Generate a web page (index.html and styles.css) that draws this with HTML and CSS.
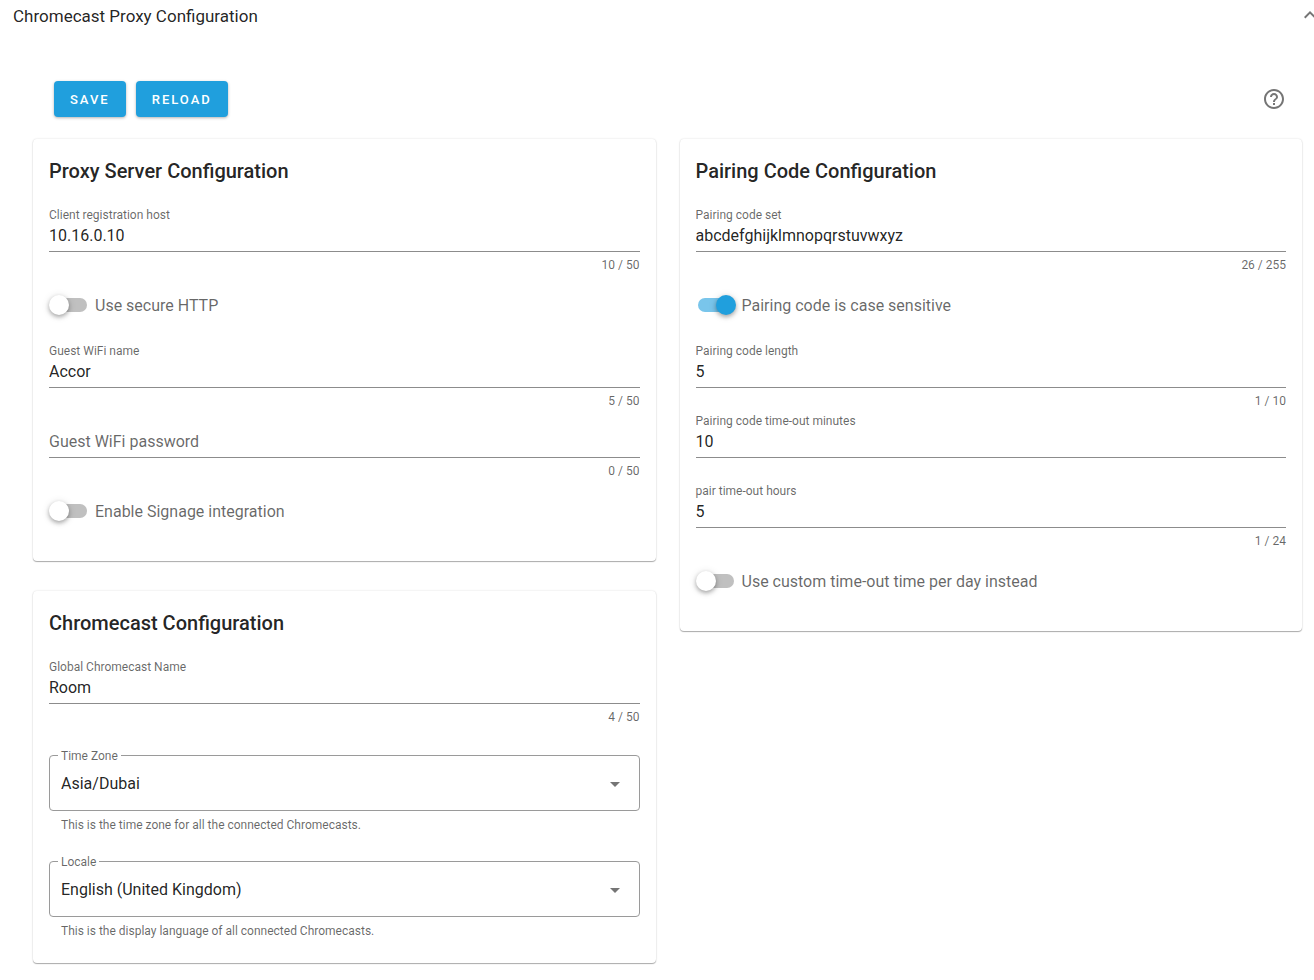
FILE: index.html
```html
<!DOCTYPE html>
<html lang="en">
<head>
<meta charset="utf-8">
<title>Chromecast Proxy Configuration</title>
<link rel="stylesheet" href="styles.css">
</head>
<body>
<header class="panel-header">
  <h1 class="panel-title">Chromecast Proxy Configuration</h1>
  <button class="icon-button" type="button" aria-label="Collapse">
    <svg width="24" height="24" viewBox="0 0 24 24"><path d="M7.41 15.41L12 10.83l4.59 4.58L18 14l-6-6-6 6z"/></svg>
  </button>
</header>
<main class="panel">
  <div class="toolbar">
    <button class="button" type="button">SAVE</button>
    <button class="button" type="button">RELOAD</button>
    <button class="icon-button help" type="button" aria-label="Help">
      <svg width="24" height="24" viewBox="0 0 24 24"><path d="M11 18h2v-2h-2v2zm1-16C6.48 2 2 6.48 2 12s4.48 10 10 10 10-4.48 10-10S17.52 2 12 2zm0 18c-4.41 0-8-3.59-8-8s3.59-8 8-8 8 3.59 8 8-3.59 8-8 8zm0-14c-2.21 0-4 1.79-4 4h2c0-1.1.9-2 2-2s2 .9 2 2c0 2-3 1.75-3 5h2c0-2.25 3-2.5 3-5 0-2.21-1.79-4-4-4z"/></svg>
    </button>
  </div>
  <div class="columns">
    <div class="column">
      <section class="card">
        <h2 class="card-title">Proxy Server Configuration</h2>
        <div class="field">
          <label for="host">Client registration host</label>
          <input id="host" type="text" value="10.16.0.10">
          <span class="counter">10 / 50</span>
        </div>
        <div class="switch">
          <input id="secure" type="checkbox">
          <label for="secure">Use secure HTTP</label>
        </div>
        <div class="field">
          <label for="wifi">Guest WiFi name</label>
          <input id="wifi" type="text" value="Accor">
          <span class="counter">5 / 50</span>
        </div>
        <div class="field field-empty">
          <label for="password">Guest WiFi password</label>
          <input id="password" type="text">
          <span class="counter">0 / 50</span>
        </div>
        <div class="switch">
          <input id="signage" type="checkbox">
          <label for="signage">Enable Signage integration</label>
        </div>
      </section>
      <section class="card">
        <h2 class="card-title">Chromecast Configuration</h2>
        <div class="field">
          <label for="name">Global Chromecast Name</label>
          <input id="name" type="text" value="Room">
          <span class="counter">4 / 50</span>
        </div>
        <div class="select-field">
          <fieldset class="outline">
            <legend><label for="zone">Time Zone</label></legend>
            <select id="zone"><option>Asia/Dubai</option></select>
            <svg class="arrow" width="24" height="24" viewBox="0 0 24 24"><path d="M7 10l5 5 5-5z"/></svg>
          </fieldset>
          <p class="hint">This is the time zone for all the connected Chromecasts.</p>
        </div>
        <div class="select-field">
          <fieldset class="outline">
            <legend><label for="locale">Locale</label></legend>
            <select id="locale"><option>English (United Kingdom)</option></select>
            <svg class="arrow" width="24" height="24" viewBox="0 0 24 24"><path d="M7 10l5 5 5-5z"/></svg>
          </fieldset>
          <p class="hint">This is the display language of all connected Chromecasts.</p>
        </div>
      </section>
    </div>
    <div class="column">
      <section class="card">
        <h2 class="card-title">Pairing Code Configuration</h2>
        <div class="field">
          <label for="set">Pairing code set</label>
          <input id="set" type="text" value="abcdefghijklmnopqrstuvwxyz">
          <span class="counter">26 / 255</span>
        </div>
        <div class="switch">
          <input id="case" type="checkbox" checked>
          <label for="case">Pairing code is case sensitive</label>
        </div>
        <div class="field">
          <label for="length">Pairing code length</label>
          <input id="length" type="text" value="5">
          <span class="counter">1 / 10</span>
        </div>
        <div class="field">
          <label for="minutes">Pairing code time-out minutes</label>
          <input id="minutes" type="text" value="10">
        </div>
        <div class="field">
          <label for="hours">pair time-out hours</label>
          <input id="hours" type="text" value="5">
          <span class="counter">1 / 24</span>
        </div>
        <div class="switch">
          <input id="custom" type="checkbox">
          <label for="custom">Use custom time-out time per day instead</label>
        </div>
      </section>
    </div>
  </div>
</main>
</body>
</html>
```
FILE: styles.css
```css
* {
  box-sizing: border-box;
}

body {
  margin: 0;
  overflow-x: hidden;
  background: #fff;
  color: rgba(0, 0, 0, 0.87);
  font-family: "Proxima Nova", Roboto, sans-serif;
  font-size: 16px;
}

button,
input,
select {
  font: inherit;
  color: inherit;
}

.panel-header {
  display: flex;
  align-items: center;
  justify-content: space-between;
  height: 32px;
  margin-right: -8px;
  padding-left: 13px;
}

.panel-title {
  margin: 0;
  font-size: 17px;
  font-weight: 400;
}

.icon-button {
  display: flex;
  padding: 0;
  border: 0;
  background: none;
  cursor: pointer;
}

.icon-button svg,
.arrow {
  fill: #757575;
}

.panel-header .icon-button {
  padding-bottom: 2px;
}

.panel {
  padding: 49px 12px 16px 33px;
}

.toolbar {
  display: flex;
  align-items: center;
  gap: 10px;
  margin-bottom: 22px;
  padding: 0 16px 0 21px;
}

.button {
  height: 36px;
  padding: 0 16px;
  border: 0;
  border-radius: 4px;
  background: #209fdd;
  box-shadow: 0 1px 3px rgba(0, 0, 0, 0.3);
  color: #fff;
  font-size: 13px;
  font-weight: 500;
  letter-spacing: 2px;
  cursor: pointer;
}

.help {
  margin-left: auto;
}

.columns {
  display: grid;
  grid-template-columns: 1fr 1fr;
  align-items: start;
  gap: 24px;
}

.column {
  display: grid;
  gap: 30px;
}

.card {
  padding: 16px 16px 11px;
  border-radius: 4px;
  box-shadow: 0 1px 1px rgba(0, 0, 0, 0.3), 0 0 2px rgba(0, 0, 0, 0.15);
}

.card-title {
  margin: 0 0 21px;
  font-size: 20px;
  font-weight: 500;
  line-height: 32px;
}

.field {
  display: grid;
  grid-template-rows: 14px 30px 26px;
}

.field label {
  color: rgba(0, 0, 0, 0.6);
  font-size: 12px;
  line-height: 14px;
}

.field input {
  width: 100%;
  padding: 0 0 2px;
  border: 0;
  border-bottom: 1px solid #8c8c8c;
  background: none;
  outline: 0;
}

.field-empty label {
  grid-area: 2 / 1;
  font-size: 16px;
  line-height: 28px;
}

.field-empty input {
  grid-area: 2 / 1;
}

.counter {
  grid-row: 3;
  justify-self: end;
  color: rgba(0, 0, 0, 0.6);
  font-size: 12px;
  line-height: 26px;
}

.switch {
  display: flex;
  align-items: center;
  gap: 8px;
  height: 66px;
  padding: 0 2px 12px;
  color: rgba(0, 0, 0, 0.6);
}

.switch input {
  appearance: none;
  width: 36px;
  height: 14px;
  margin: 0;
  border-radius: 7px;
  background: #c0c0c0;
  cursor: pointer;
}

.switch input::before {
  content: "";
  display: block;
  width: 20px;
  height: 20px;
  margin: -3px 0 0 -2px;
  border-radius: 50%;
  background: #fff;
  box-shadow: 0 2px 4px rgba(0, 0, 0, 0.3), 0 1px 8px rgba(0, 0, 0, 0.12);
}

.switch input:checked {
  background: #79c5eb;
}

.switch input:checked::before {
  margin-left: 18px;
  background: #209fdd;
}

.select-field {
  height: 106px;
  padding-top: 17px;
}

.select-field:last-child {
  margin-bottom: 10px;
}

.outline {
  display: flex;
  align-items: center;
  height: 64px;
  margin: 0;
  padding: 0;
  border: 1px solid #9a9a9a;
  border-radius: 4px;
}

.outline legend {
  margin-left: 8px;
  padding: 2px 3px 0;
  color: rgba(0, 0, 0, 0.6);
  font-size: 12px;
  line-height: 14px;
}

.outline select {
  appearance: none;
  flex: 1;
  height: 46px;
  margin-right: -36px;
  padding: 0 36px 6px 11px;
  border: 0;
  background: none;
  outline: 0;
}

.arrow {
  margin: 0 12px 6px 0;
  pointer-events: none;
}

.hint {
  margin: 6px 0 0;
  padding-left: 12px;
  color: rgba(0, 0, 0, 0.6);
  font-size: 12px;
  line-height: 16px;
}
```
